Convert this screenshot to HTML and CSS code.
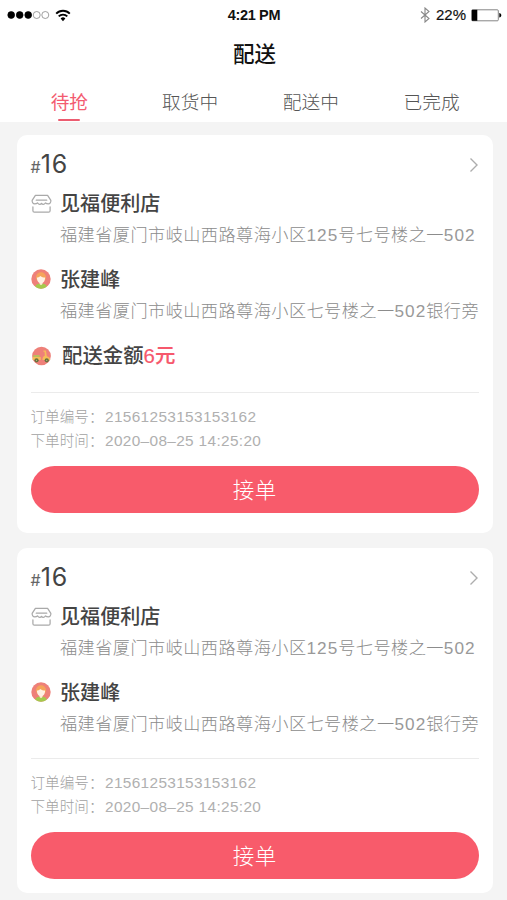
FILE: index.html
```html
<!DOCTYPE html>
<html lang="zh-CN">
<head>
<meta charset="utf-8">
<title>配送</title>
<link rel="stylesheet" href="styles.css">
</head>
<body>
<svg class="defs" width="0" height="0" aria-hidden="true">
  <symbol id="store" viewBox="0 0 22 20">
    <g fill="none" stroke="#a9a9a9" stroke-width="1.300" stroke-linejoin="round" stroke-linecap="round">
      <path d="M4.600 1h12.800l3.400 5.200c.2 2.200-1 3.600-2.600 3.600-1.500 0-2.400-.3-3-1-.7.900-1.500 1.500-2.300 1.500-.9 0-1.500-.4-1.900-1-.4.600-1 1-1.900 1-.8 0-1.600-.6-2.300-1.500-.6.700-1.500 1-3 1-1.600 0-2.800-1.400-2.600-3.600z"/>
      <path d="M5.500 6h11M2 13v4c0 1 .6 1.600 1.600 1.600h14.800c1 0 1.600-.6 1.600-1.600v-4"/>
    </g>
  </symbol>
  <symbol id="person" viewBox="0 0 20 20">
    <circle cx="10" cy="10" r="9.700" fill="#ee8079"/>
    <path d="M4.200 17.700c.5-2.300 2.600-3.200 5.800-3.200s5.300.9 5.800 3.200a9.700 9.700 0 0 1-11.600 0z" fill="#a5c94d"/>
    <circle cx="10" cy="8.300" r="5" fill="#f5a45b"/>
    <path d="M8.500 12h3v3L10 16.200 8.500 15z" fill="#ffe7d5"/>
    <path d="M5.900 8.600c1.600-.2 2.800-.8 3.600-1.700 1.200 1 2.600 1.500 4.600 1.600 0 3.300-1.500 5.800-4.100 5.800s-4.100-2.400-4.100-5.700z" fill="#fff0e3"/>
  </symbol>
  <symbol id="scooter" viewBox="0 0 22 20">
    <circle cx="11" cy="10" r="9.800" fill="#ee8079"/>
    <path d="M2.500 9h6.500v3H2.500z" fill="#b9c05c"/>
    <path d="M1.800 11h8.400v3.300H1.600zM13 4.200h2.600l1 6c2 .3 3.300 1.600 3.600 3.900h-8.200c0-2.500 1-4 2.500-4.700L14.200 5.600H13z" fill="#f6bd58"/>
    <circle cx="5.800" cy="14.500" r="2.200" fill="#66713f"/><circle cx="5.800" cy="14.500" r=".6" fill="#d6d891"/>
    <circle cx="16.500" cy="14.500" r="2.200" fill="#66713f"/><circle cx="16.500" cy="14.500" r=".6" fill="#d6d891"/>
  </symbol>
  <symbol id="chevron" viewBox="0 0 10 16">
    <path d="M1.500 1.500 8 8l-6.500 6.500" fill="none" stroke="#adadad" stroke-width="1.400"/>
  </symbol>
</svg>

<header class="top">
  <div class="status">
    <div class="signal">
      <svg width="43" height="10" viewBox="0 0 43 10"><g stroke="#000" stroke-width=".7"><circle cx="4.200" cy="5" r="3.400"/><circle cx="12.700" cy="5" r="3.400"/><circle cx="21.200" cy="5" r="3.400"/><g fill="none" stroke="#777"><circle cx="29.700" cy="5" r="3.500"/><circle cx="38.300" cy="5" r="3.500"/></g></g></svg>
      <svg width="16" height="13" viewBox="0 0 16 13"><g fill="none" stroke="#000" stroke-width="1.900"><path d="M1.200 4.600a9.600 9.600 0 0 1 13.600 0"/><path d="M3.700 7.400a6 6 0 0 1 8.600 0"/></g><path d="M5.600 9.500a3.400 3.400 0 0 1 4.800 0L8 12.200z"/></svg>
    </div>
    <div class="clock">4:21 PM</div>
    <div class="power">
      <svg width="10" height="16" viewBox="0 0 10 16"><path d="M1 4.500 9 11.500 5 15V1l4 3.500L1 11.500" fill="none" stroke="#888" stroke-width="1.100"/></svg>
      <span class="percent">22%</span>
      <svg width="31" height="13" viewBox="0 0 31 13"><rect x=".8" y=".8" width="26.500" height="11" rx="1" fill="none" stroke="#777" stroke-width=".9"/><path d="M.8.800h5.500v11H.8z"/><path d="M28.300 4c1.300.4 2 1.200 2 2.300s-.7 1.900-2 2.300z"/></svg>
    </div>
  </div>
  <h1 class="title">配送</h1>
  <nav class="tabs">
    <a class="tab tab-active">待抢</a>
    <a class="tab">取货中</a>
    <a class="tab">配送中</a>
    <a class="tab">已完成</a>
  </nav>
</header>

<main class="orders">
  <article class="card">
    <div class="card-head"><div class="number"><small>#</small>16</div><svg class="chevron"><use href="#chevron"/></svg></div>
    <section class="party">
      <svg class="icon store"><use href="#store"/></svg>
      <div><h2 class="name">见福便利店</h2><p class="address">福建省厦门市岐山西路尊海小区<span class="num">125</span>号七号楼之一<span class="num">502</span></p></div>
    </section>
    <section class="party">
      <svg class="icon"><use href="#person"/></svg>
      <div><h2 class="name">张建峰</h2><p class="address">福建省厦门市岐山西路尊海小区七号楼之一<span class="num">502</span>银行旁</p></div>
    </section>
    <section class="party fee">
      <svg class="icon scooter"><use href="#scooter"/></svg>
      <h2 class="name amount">配送金额<span class="price">6元</span></h2>
    </section>
    <dl class="meta">
      <div class="meta-row"><dt>订单编号：</dt><dd>21561253153153162</dd></div>
      <div class="meta-row"><dt>下单时间：</dt><dd>2020–08–25 14:25:20</dd></div>
    </dl>
    <button class="accept">接单</button>
  </article>

  <article class="card card-short">
    <div class="card-head"><div class="number"><small>#</small>16</div><svg class="chevron"><use href="#chevron"/></svg></div>
    <section class="party">
      <svg class="icon store"><use href="#store"/></svg>
      <div><h2 class="name">见福便利店</h2><p class="address">福建省厦门市岐山西路尊海小区<span class="num">125</span>号七号楼之一<span class="num">502</span></p></div>
    </section>
    <section class="party">
      <svg class="icon"><use href="#person"/></svg>
      <div><h2 class="name">张建峰</h2><p class="address">福建省厦门市岐山西路尊海小区七号楼之一<span class="num">502</span>银行旁</p></div>
    </section>
    <dl class="meta">
      <div class="meta-row"><dt>订单编号：</dt><dd>21561253153153162</dd></div>
      <div class="meta-row"><dt>下单时间：</dt><dd>2020–08–25 14:25:20</dd></div>
    </dl>
    <button class="accept">接单</button>
  </article>
</main>
</body>
</html>
```
FILE: styles.css
```css
* { box-sizing: border-box; }
body {
  margin: 0;
  height: 900px;
  overflow: hidden;
  background: #f4f4f4;
  color: #444;
  font-family: "Liberation Sans", "Noto Sans CJK SC", sans-serif;
}
h1, h2, p, dl, dd { margin: 0; }
svg { display: block; flex: none; }
.defs { position: absolute; }

.top { position: relative; height: 122px; background: #fff; }
.status {
  display: grid;
  grid-template-columns: 1fr auto 1fr;
  align-items: center;
  height: 30px;
  padding: 0 5px 0 7px;
  color: #111;
  font-size: 15px;
  line-height: 30px;
}
.signal, .power { display: flex; align-items: center; }
.signal { gap: 5px; }
.power { justify-content: flex-end; gap: 7px; }
.power svg:first-child { margin-right: -1px; }
.percent { margin-right: -2px; -webkit-text-stroke: .2px #111; }
.clock { margin-left: -1px; font-size: 14.5px; font-weight: 700; letter-spacing: -.35px; }
.title {
  height: 48px;
  padding-left: 2px;
  color: #111;
  font-size: 21.5px;
  font-weight: 500;
  line-height: 50px;
  text-align: center;
}
.tabs {
  display: grid;
  grid-template-columns: repeat(4, 1fr);
  height: 44px;
  padding: 0 15px 0 9px;
}
.tab {
  display: flex;
  flex-direction: column;
  align-items: center;
  color: #555;
  font-size: 18.7px;
  font-weight: 300;
  line-height: 49px;
}
.tab-active { color: #f35b70; font-weight: 400; }
.tab-active::after {
  content: "";
  width: 22px;
  height: 2px;
  margin-top: -8px;
  border-radius: 1px;
  background: #ec5c70;
}

.orders {
  display: flex;
  flex-direction: column;
  gap: 15px;
  padding: 13px 14px 0 17px;
}
.card {
  height: 398px;
  padding: 14px 14px 0 13.500px;
  border-radius: 10px;
  background: #fff;
}
.card-short { height: 345px; }
.card-head {
  display: flex;
  align-items: center;
  justify-content: space-between;
  height: 32px;
}
.chevron { width: 10px; height: 16px; }
.number { font: 400 25px/32px Inter, sans-serif; letter-spacing: 1px; }
.number small { color: #666; font-size: 16px; letter-spacing: 0; }
.party { display: flex; height: 76px; padding-top: 8px; }
.icon { width: 20px; height: 20px; margin: 4px 9.500px 0 0; }
.icon.store { width: 21px; margin-top: 5px; margin-right: 8.500px; }
.name { font-size: 20.1px; font-weight: 500; line-height: 31px; }
.address {
  color: #8c8c8c;
  font-size: 17.2px;
  font-weight: 300;
  line-height: 31px;
  letter-spacing: .42px;
  white-space: nowrap;
}
.address .num { color: #999; letter-spacing: 1px; }
.fee { height: 60px; }
.icon.scooter { width: 21px; margin-top: 5px; margin-right: 10.500px; }
.amount { font-size: 20.4px; }
.price { color: #f6586c; -webkit-text-stroke: .2px #f6586c; }
.meta {
  height: 73.500px;
  padding-top: 12px;
  border-top: 1px solid #ebebeb;
  color: #a2a2a2;
  font-weight: 300;
}
.card-short .meta { margin-top: 12px; }
.fee + .meta { margin-top: -1px; }
.meta-row { display: flex; height: 24px; line-height: 24px; }
.meta dt { width: 74.5px; font-size: 14.6px; white-space: nowrap; }
.meta dd { color: #b0b0b0; font-size: 15.4px; letter-spacing: .34px; }
.accept {
  display: block;
  width: 100%;
  height: 47.500px;
  padding: 0 0 2px;
  border: 0;
  border-radius: 24px;
  background: #f85b6b;
  color: #fff;
  font: 300 21.5px/45px "Noto Sans CJK SC", sans-serif;
  letter-spacing: .6px;
}
```
